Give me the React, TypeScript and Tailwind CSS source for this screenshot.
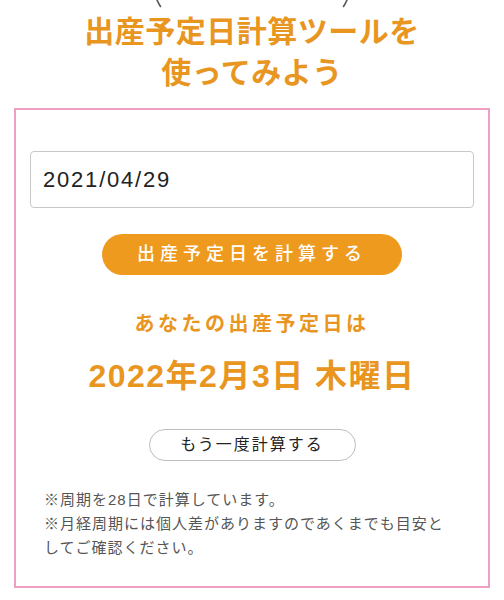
const font = { fontFamily: '"Liberation Sans", "Noto Sans CJK JP", sans-serif' };

export default function App() {
  return (
    <div className="w-[504px] bg-white" style={font}>
      {/* decoration marks from above */}
      <div className="relative h-[11px]">
        <svg className="absolute left-0 top-0" width="504" height="11" viewBox="0 0 504 11">
          <path d="M157 0 Q158.5 3.5 160.5 6.5" stroke="#555" strokeWidth="1.6" fill="none" strokeLinecap="round" />
          <path d="M347 0 Q345.5 3.5 343.5 6.5" stroke="#555" strokeWidth="1.6" fill="none" strokeLinecap="round" />
        </svg>
      </div>

      <h1 className="text-center text-[30px] leading-[41px] font-bold text-[#e8961f] tracking-[0.5px]">
        出産予定日計算ツールを
        <br />
        使ってみよう
      </h1>

      <div className="mx-[14px] mt-[15px] border-2 border-[#ef9fc4] px-[14px] pt-[41px] pb-[26px]">
        <div className="h-[57px] rounded-[4px] border border-[#c8c8c8] px-[12px] flex items-center text-[22px] text-[#222] tracking-[1.8px]">
          2021/04/29
        </div>

        <div className="mt-[26px] flex justify-center">
          <button className="h-[41px] w-[300px] rounded-full bg-[#ee9a1e] text-white text-[18px] font-medium tracking-[5px]">
            出産予定日を計算する
          </button>
        </div>

        <p className="mt-[35px] text-center text-[20px] leading-[28px] font-bold text-[#e8961f] tracking-[3.5px]">
          あなたの出産予定日は
        </p>

        <p className="mt-[18px] text-center text-[32px] leading-[40px] font-bold text-[#e8961f] tracking-[1.5px]">
          2022年2月3日 木曜日
        </p>

        <div className="mt-[33px] flex justify-center">
          <button className="h-[32px] w-[207px] rounded-full border border-[#bdbdbd] bg-white text-[16px] text-[#222] tracking-[2px]">
            もう一度計算する
          </button>
        </div>

        <div className="mt-[27px] pl-[14px] w-[424px] text-[15px] leading-[24px] text-[#555] tracking-[1px]">
          <p>※周期を28日で計算しています。</p>
          <p>※月経周期には個人差がありますのであくまでも目安としてご確認ください。</p>
        </div>
      </div>
    </div>
  );
}
